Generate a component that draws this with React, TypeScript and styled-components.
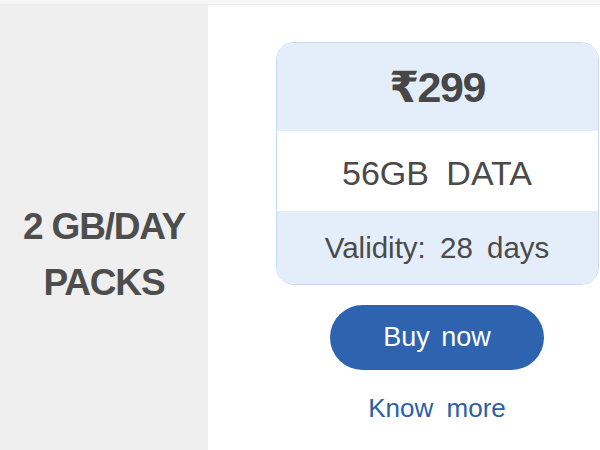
import React from "react";
import styled, { createGlobalStyle } from "styled-components";

const Global = createGlobalStyle`
  html, body { margin: 0; padding: 0; background: #ffffff; }
  body { font-family: "Liberation Sans", Arial, "DejaVu Sans", sans-serif; overflow: hidden; }
`;

const Page = styled.div`
  width: 600px;
  height: 450px;
  display: flex;
  flex-direction: column;
  background: #ffffff;
`;

const TopStrip = styled.div`
  height: 4px;
  background: #f6f6f6;
  border-bottom: 1px solid #ededed;
  flex: none;
`;

const Body = styled.div`
  flex: 1;
  display: flex;
`;

const Side = styled.div`
  width: 208px;
  flex: none;
  background: #efefef;
  display: flex;
  flex-direction: column;
  align-items: center;
  padding-top: 194px;
  box-sizing: border-box;
`;

const SideTitle = styled.div`
  font-weight: bold;
  font-size: 37px;
  line-height: 56px;
  letter-spacing: -1.2px;
  color: #4d4d4d;
  text-align: center;
`;

const Main = styled.div`
  flex: 1;
  display: flex;
  flex-direction: column;
  align-items: center;
  padding: 37px 0 0 66px;
`;

const Card = styled.div`
  width: 323px;
  border: 1.5px solid #c6dcf6;
  border-radius: 18px;
  overflow: hidden;
  box-sizing: border-box;
  display: flex;
  flex-direction: column;
`;

const Row = styled.div<{ $tint: boolean; $h: number }>`
  height: ${(p) => p.$h}px;
  background: ${(p) => (p.$tint ? "#e4eefa" : "#ffffff")};
  display: flex;
  align-items: center;
  justify-content: center;
  color: #4a4a4a;
`;

const Price = styled.span`
  font-weight: bold;
  font-size: 43px;
  letter-spacing: -1.5px;
  color: #474747;
`;

const Data = styled.span`
  font-size: 34px;
  word-spacing: 8px;
  margin-top: 4px;
`;

const Validity = styled.span`
  font-size: 29.5px;
  word-spacing: 6px;
`;

const BuyButton = styled.button`
  margin-top: 20px;
  width: 214px;
  height: 65px;
  border: none;
  border-radius: 33px;
  background: #2d63af;
  color: #ffffff;
  font-family: inherit;
  font-size: 27px;
  word-spacing: 4px;
  cursor: pointer;
`;

const KnowMore = styled.a`
  margin-top: 23px;
  font-size: 26px;
  word-spacing: 6px;
  color: #2d5fa6;
  text-decoration: none;
`;

export default function App() {
  return (
    <>
      <Global />
      <Page>
        <TopStrip />
        <Body>
          <Side>
            <SideTitle>
              2 GB/DAY
              <br />
              PACKS
            </SideTitle>
          </Side>
          <Main>
            <Card>
              <Row $tint $h={88}>
                <Price>₹299</Price>
              </Row>
              <Row $tint={false} $h={80}>
                <Data>56GB DATA</Data>
              </Row>
              <Row $tint $h={73}>
                <Validity>Validity: 28 days</Validity>
              </Row>
            </Card>
            <BuyButton>Buy now</BuyButton>
            <KnowMore href="#">Know more</KnowMore>
          </Main>
        </Body>
      </Page>
    </>
  );
}
